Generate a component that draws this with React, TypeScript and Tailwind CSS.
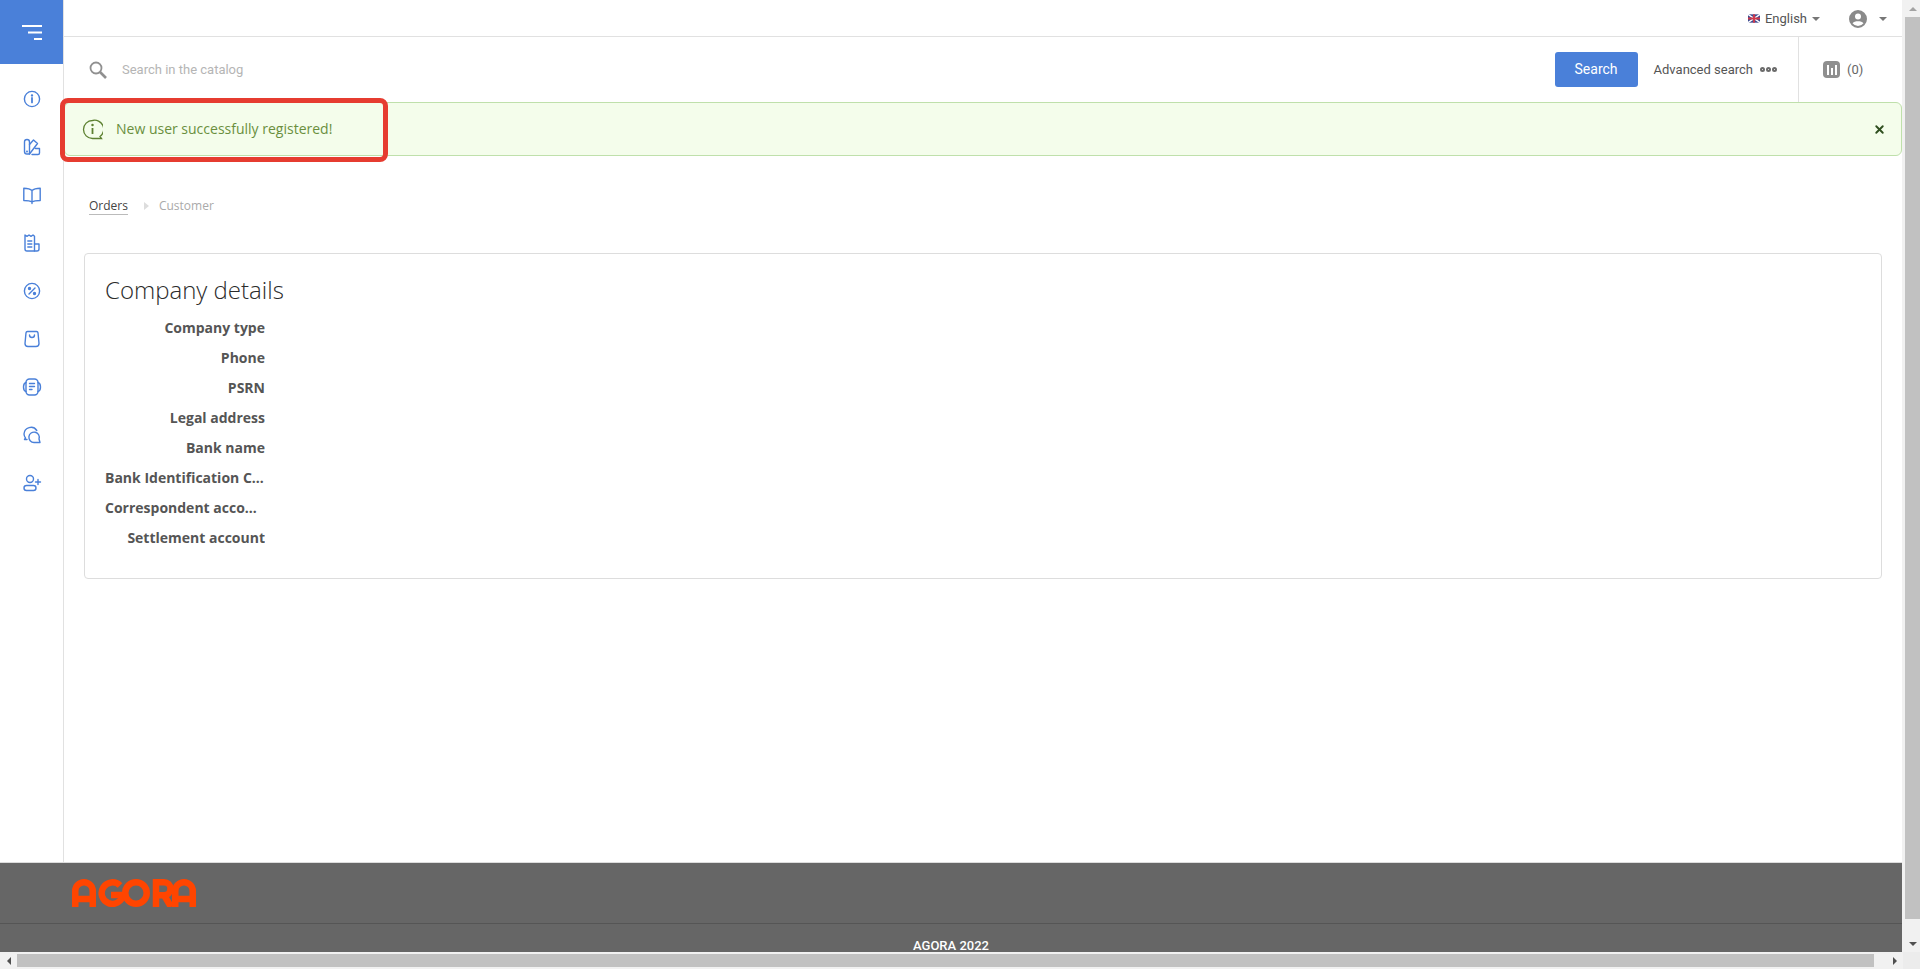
import React from 'react';
import { X } from 'lucide-react';

const labels = [
  'Company type',
  'Phone',
  'PSRN',
  'Legal address',
  'Bank name',
  'Bank Identification Code',
  'Correspondent account',
  'Settlement account',
];

const NavIcon = ({ children }: { children: React.ReactNode }) => (
  <div className="h-12 flex items-center justify-center">
    <svg width="20" height="20" viewBox="0 0 20 20" fill="none" stroke="#4a80d9" strokeWidth="1.4" strokeLinecap="round" strokeLinejoin="round">
      {children}
    </svg>
  </div>
);

const Sidebar = () => (
  <aside className="w-[64px] shrink-0 border-r border-[#e1e1e1] flex flex-col">
    <div className="h-[64px] bg-[#4a80d9] flex items-center justify-center">
      <svg width="20" height="15" viewBox="0 0 20 15" fill="none" stroke="#fff" strokeWidth="2">
        <path d="M0 1h20M6 7.500h14M12 14h8" />
      </svg>
    </div>
    <nav className="pt-[11px] flex flex-col">
      <NavIcon>
        <circle cx="10" cy="10" r="7.600" />
        <path d="M10 9v4.400" strokeWidth="1.800" />
        <circle cx="10" cy="6.400" r=".5" />
      </NavIcon>
      <NavIcon>
        <path d="M2.500 5a2.500 2.500 0 0 1 5 0v12H5a2.500 2.500 0 0 1-2.500-2.500z" />
        <path d="M7.500 7.500 11.500 3l4 3.500-8 10.500M10 17.500h6a1.500 1.500 0 0 0 1.500-1.500v-4.500h-4" />
        <circle cx="5" cy="14.500" r=".4" />
      </NavIcon>
      <NavIcon>
        <path d="M10 5.500C8 3.500 5 3.200 1.800 3.200v12.300c3.200 0 6.200.2 8.200 1.500 2-1.300 5-1.500 8.200-1.500V3.200C15 3.200 12 3.500 10 5.500zM10 5.500V18.500" />
      </NavIcon>
      <NavIcon>
        <path d="M3 2l2 1.300L7 2l2 1.300L11 2l1.500 1.300V18H5a2 2 0 0 1-2-2z" />
        <path d="M12.500 11h4.500v5a2 2 0 0 1-2 2h-2.500M5.800 8h4M5.800 11h4M5.800 14h4" />
      </NavIcon>
      <NavIcon>
        <circle cx="10" cy="10" r="7.600" />
        <path d="M13 7l-6 6" />
        <circle cx="7.500" cy="7.500" r="1" fill="#4a80d9" />
        <circle cx="12.500" cy="12.500" r="1" fill="#4a80d9" />
      </NavIcon>
      <NavIcon>
        <path d="M5.500 2.500h9a1.500 1.500 0 0 1 1.500 1.300l1 10.700a3 3 0 0 1-3 3h-8a3 3 0 0 1-3-3l1-10.700a1.500 1.500 0 0 1 1.500-1.300z" />
        <path d="M7.500 6a2.500 2.500 0 0 0 5 0" />
      </NavIcon>
      <NavIcon>
        <rect x="4" y="2" width="12" height="16" rx="3.500" />
        <path d="M4 5.500C2.500 6 1.500 7.500 1.500 10s1 4 2.500 4.500M16 5.500c1.500.5 2.500 2 2.500 4.500s-1 4-2.500 4.500M7.500 6.500h5M7.500 9.500h5M7.500 12.500h2.500" />
      </NavIcon>
      <NavIcon>
        <path d="M5 14.500H2.500l1-1.500A7 7 0 0 1 2 9a7 7 0 0 1 12.800-3.500" />
        <path d="M18 17.500h-6a5.200 5.200 0 1 1 5-3.500z" />
      </NavIcon>
      <NavIcon>
        <circle cx="8" cy="6" r="3.500" />
        <rect x="2" y="12.500" width="12" height="5" rx="2.500" />
        <path d="M16 6.500v5M13.500 9h5" />
      </NavIcon>
    </nav>
  </aside>
);

const TopBar = () => (
  <div className="h-[37px] shrink-0 border-b border-[#e1e1e1] flex items-center justify-end pr-[15px] pt-[1px] text-[#555] text-[13px]">
    <svg className="mr-[5px]" width="12" height="9" viewBox="0 0 13 9">
      <rect width="13" height="9" fill="#3c4a8f" />
      <path d="M0 0l13 9M13 0L0 9" stroke="#fff" strokeWidth="1.500" />
      <path d="M6.500 0v9M0 4.500h13" stroke="#d0384a" strokeWidth="2" />
    </svg>
    <span>English</span>
    <span className="ml-[5px] w-0 h-0 border-x-[4px] border-x-transparent border-t-[4px] border-t-[#777]" />
    <svg className="ml-[29px]" width="18" height="18" viewBox="0 0 18 18" fill="#8a8a8a">
      <path d="M9 0a9 9 0 1 0 0 18A9 9 0 0 0 9 0zm0 3.500a3 3 0 1 1 0 6 3 3 0 0 1 0-6zM9 16a7 7 0 0 1-5.500-2.700C4 11.800 7 11.200 9 11.200s5 .6 5.500 2.100A7 7 0 0 1 9 16z" />
    </svg>
    <span className="ml-[12px] w-0 h-0 border-x-[4px] border-x-transparent border-t-[4px] border-t-[#777]" />
  </div>
);

const SearchBar = () => (
  <div className="h-[65px] shrink-0 flex items-center text-[13px]">
    <div className="flex-1 flex items-center pl-[25px]">
      <svg width="18" height="18" viewBox="0 0 18 18" fill="none" stroke="#909090">
        <circle cx="7" cy="7" r="5.500" strokeWidth="1.800" />
        <path d="M11 11l6 6" strokeWidth="2.600" />
      </svg>
      <span className="ml-[15px] text-[#b5b5b5]">Search in the catalog</span>
    </div>
    <button className="w-[83px] h-[35px] bg-[#4a80d9] rounded-[3px] text-white text-[14px]">Search</button>
    <span className="ml-[16px] text-[#555]">Advanced search</span>
    <span className="ml-[7px] flex gap-[1px]">
      <i className="w-[5px] h-[5px] rounded-full border-[2px] border-[#6b6b6b]" />
      <i className="w-[5px] h-[5px] rounded-full border-[2px] border-[#6b6b6b]" />
      <i className="w-[5px] h-[5px] rounded-full border-[2px] border-[#6b6b6b]" />
    </span>
    <div className="ml-[21px] w-[104px] h-full border-l border-[#e1e1e1] flex items-center pl-[24px] text-[#666]">
      <span className="w-[17px] h-[17px] rounded-[4px] bg-[#8f8f8f] flex items-end justify-center gap-[2px] pb-[3px]">
        <i className="w-[2px] h-[10px] bg-white" />
        <i className="w-[2px] h-[7px] bg-white" />
        <i className="w-[2px] h-[10px] bg-white" />
      </span>
      <span className="ml-[7px]">(0)</span>
    </div>
  </div>
);

const AlertBanner = () => (
  <div className="relative h-[54px] shrink-0 bg-[#f4fdeb] border border-[#bfe0ab] rounded-[6px] flex items-center pl-[17px] pr-[15px] text-[#6a8f3e] text-[14px] font-['Open_Sans',sans-serif]">
    <svg width="21" height="21" viewBox="0 0 21 21" fill="none" stroke="#5c8030" strokeWidth="1.300">
      <path d="M10.500 1.500a9 9 0 1 0 0 18h9l-1.500-2a9 9 0 0 0-7.500-16z" />
      <path d="M10.500 9v6" strokeWidth="1.800" />
      <circle cx="10.500" cy="6" r=".6" />
    </svg>
    <span className="ml-[13px] flex-1 pb-[2px]">New user successfully registered!</span>
    <X size={13} strokeWidth={3.500} color="#2f4f1f" />
    {/* annotation box from the screenshot */}
    <div className="absolute left-[-5px] top-[-5px] w-[328px] h-[64px] border-[5px] border-[#e63c30] rounded-[8px]" />
  </div>
);

const Breadcrumbs = () => (
  <div className="h-[76px] shrink-0 pl-[25px] pt-[24px] flex items-center text-[12px] font-['Open_Sans',sans-serif]">
    <span className="text-[#444] border-b border-[#bbb] leading-[16px]">Orders</span>
    <span className="ml-[16px] w-0 h-0 border-y-[4px] border-y-transparent border-l-[5px] border-l-[#ddd]" />
    <span className="ml-[10px] text-[#aaa]">Customer</span>
  </div>
);

const Card = () => (
  <section className="mt-[21px] ml-[20px] mr-[20px] h-[326px] border border-[#dddddd] rounded-[4px] pl-[20px] pt-[19px] font-['Open_Sans',sans-serif]">
    <h2 className="text-[24px] leading-[33px] font-light text-[#2b2b2b]">Company details</h2>
    <dl className="mt-[7px] w-[160px]">
      {labels.map(label => (
        <dt key={label} className="h-[30px] leading-[30px] text-right text-[14px] font-bold text-[#555] truncate">{label}</dt>
      ))}
    </dl>
  </section>
);

const Footer = () => (
  <footer className="h-[90px] shrink-0 bg-[#666] border-t border-[#dcdcdc] overflow-hidden">
    <div className="h-[61px] border-b border-[#555] pl-[72px] flex items-center">
      <svg width="124" height="28" viewBox="0 0 124 28" fill="none" stroke="#ff4500" strokeWidth="6.500">
        <path d="M3.250 28V12a8.750 8.750 0 0 1 17.500 0V28M3 20h18" />
        <path d="M48 6.500a10.750 10.750 0 1 0 3 9.500H39" />
        <circle cx="64" cy="14" r="10.750" />
        <path d="M84 28V3.250h8a6.500 6.500 0 0 1 0 13h-8M92 16l7 12" />
        <path d="M103.250 28V12a8.750 8.750 0 0 1 17.500 0V28M103 20h18" />
      </svg>
    </div>
    <div className="pt-[16px] text-center text-white text-[13px] leading-[12px] font-medium">AGORA 2022</div>
  </footer>
);

export default function App() {
  return (
    <div className="w-[1920px] h-[969px] overflow-hidden flex flex-col bg-white font-['Roboto',sans-serif]">
      <div className="flex-1 min-h-0 flex">
        <div className="flex-1 min-w-0 flex flex-col">
          <div className="flex-1 min-h-0 flex">
            <Sidebar />
            <main className="flex-1 min-w-0 flex flex-col">
              <TopBar />
              <SearchBar />
              <AlertBanner />
              <Breadcrumbs />
              <Card />
            </main>
          </div>
          <Footer />
        </div>
        <div className="w-[18px] shrink-0 bg-[#f1f1f1] flex flex-col items-end">
          <div className="w-[15px] h-[17px] flex items-center justify-center">
            <span className="w-0 h-0 border-x-[4px] border-x-transparent border-b-[4px] border-b-[#a3a3a3]" />
          </div>
          <div className="w-[15px] h-[902px] bg-[#c1c1c1]" />
          <div className="w-[15px] flex-1 flex items-end justify-center pb-[6px]">
            <span className="w-0 h-0 border-x-[4px] border-x-transparent border-t-[4px] border-t-[#505050]" />
          </div>
        </div>
      </div>
      <div className="h-[17px] shrink-0 bg-[#f1f1f1] flex items-center">
        <div className="w-[17px] flex justify-center">
          <span className="w-0 h-0 border-y-[4px] border-y-transparent border-r-[4px] border-r-[#505050]" />
        </div>
        <div className="w-[1857px] h-[13px] bg-[#c1c1c1]" />
        <div className="flex-1 flex pl-[19px]">
          <span className="w-0 h-0 border-y-[4px] border-y-transparent border-l-[4px] border-l-[#505050]" />
        </div>
        <div className="w-[17px] h-full bg-[#ececec]" />
      </div>
    </div>
  );
}
